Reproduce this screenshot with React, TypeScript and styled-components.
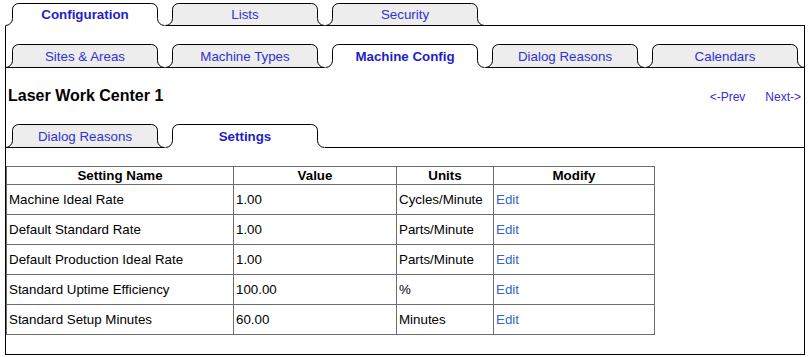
import React from "react";
import styled, { createGlobalStyle } from "styled-components";

const Global = createGlobalStyle`
  html, body { margin: 0; padding: 0; background: #ffffff; }
  body {
    font-family: "Liberation Sans", Arial, Helvetica, sans-serif;
    font-size: 13.33px;
    color: #000000;
  }
`;

const Page = styled.div`
  width: 800px;
  padding: 3px 0 0 5px;
`;

const Strip = styled.div<{ $h: number; $inset?: boolean; $mt?: number }>`
  display: flex;
  height: ${(p) => p.$h}px;
  margin: ${(p) => p.$mt ?? 0}px ${(p) => (p.$inset ? -1 : 0)}px 0;
`;

const TabSlot = styled.div<{ $active?: boolean }>`
  position: relative;
  flex: 0 0 160px;
  display: flex;
  align-items: center;
  justify-content: center;
  font-size: 13.33px;
  font-weight: ${(p) => (p.$active ? 700 : 400)};
  color: ${(p) => (p.$active ? "#1e1ec6" : "#3030d4")};
  cursor: pointer;
`;

const TabShape = styled.svg`
  position: absolute;
  left: 0;
  top: 0;
  width: 100%;
  height: 100%;
  overflow: visible;
`;

const TabLabel = styled.span`
  position: relative;
`;

const StripRest = styled.div`
  flex: 1;
  border-bottom: 1px solid #000000;
`;

const Panel = styled.div`
  border: 1px solid #000000;
  border-top: none;
  padding: 18px 0 19px 0;
`;

const HeaderRow = styled.div`
  display: flex;
  align-items: center;
  justify-content: space-between;
  height: 20px;
  margin: 18px 3px 0 2px;
`;

const Title = styled.h1`
  margin: 0;
  font-size: 16px;
  font-weight: 700;
  color: #000000;
`;

const Pager = styled.div`
  display: flex;
  gap: 20px;
  font-size: 12px;
  padding-top: 2px;
`;

const PagerLink = styled.a`
  color: #2e2ed6;
  text-decoration: none;
  cursor: pointer;
`;

const Grid = styled.table`
  border-collapse: collapse;
  table-layout: fixed;
  width: 648px;
  margin-top: 18px;
  font-size: 13.33px;
`;

const Col = styled.col<{ $w: number }>`
  width: ${(p) => p.$w}px;
`;

const HeadCell = styled.th`
  height: 17px;
  padding: 0;
  border: 1px solid #6c6c6c;
  font-weight: 700;
  text-align: center;
  vertical-align: middle;
`;

const Cell = styled.td`
  height: 29px;
  padding: 0 2px;
  border: 1px solid #6c6c6c;
  text-align: left;
  vertical-align: middle;
  white-space: nowrap;
`;

const EditLink = styled.a`
  color: #3366cc;
  text-decoration: none;
  cursor: pointer;
`;

const tabPath = (w: number, h: number, closed: boolean) => {
  const b = h - 0.5;
  const f = 7;
  const r = 6;
  return (
    `M0.5 ${b} A${f} ${f} 0 0 0 ${f + 0.5} ${b - f} ` +
    `L${f + 0.5} ${r + 0.5} A${r} ${r} 0 0 1 ${f + r + 0.5} 0.5 ` +
    `L${w - f - r - 0.5} 0.5 A${r} ${r} 0 0 1 ${w - f - 0.5} ${r + 0.5} ` +
    `L${w - f - 0.5} ${b - f} A${f} ${f} 0 0 0 ${w - 0.5} ${b}` +
    (closed ? " Z" : "")
  );
};

type TabProps = { label: string; active?: boolean; h: number };

const Tab = ({ label, active, h }: TabProps) => (
  <TabSlot $active={active}>
    <TabShape viewBox={`0 0 160 ${h}`} preserveAspectRatio="none">
      <path
        d={tabPath(160, h, !active)}
        fill={active ? "#ffffff" : "#ededed"}
        stroke="#000000"
        strokeWidth={1}
      />
    </TabShape>
    <TabLabel>{label}</TabLabel>
  </TabSlot>
);

const rows = [
  { name: "Machine Ideal Rate", value: "1.00", units: "Cycles/Minute" },
  { name: "Default Standard Rate", value: "1.00", units: "Parts/Minute" },
  { name: "Default Production Ideal Rate", value: "1.00", units: "Parts/Minute" },
  { name: "Standard Uptime Efficiency", value: "100.00", units: "%" },
  { name: "Standard Setup Minutes", value: "60.00", units: "Minutes" },
];

export default function App() {
  return (
    <>
      <Global />
      <Page>
        <Strip $h={23}>
          <Tab h={23} label="Configuration" active />
          <Tab h={23} label="Lists" />
          <Tab h={23} label="Security" />
          <StripRest />
        </Strip>
        <Panel>
          <Strip $h={24} $inset>
            <Tab h={24} label="Sites & Areas" />
            <Tab h={24} label="Machine Types" />
            <Tab h={24} label="Machine Config" active />
            <Tab h={24} label="Dialog Reasons" />
            <Tab h={24} label="Calendars" />
          </Strip>
          <HeaderRow>
            <Title>Laser Work Center 1</Title>
            <Pager>
              <PagerLink>&lt;-Prev</PagerLink>
              <PagerLink>Next-&gt;</PagerLink>
            </Pager>
          </HeaderRow>
          <Strip $h={24} $inset $mt={18}>
            <Tab h={24} label="Dialog Reasons" />
            <Tab h={24} label="Settings" active />
            <StripRest />
          </Strip>
          <Grid>
            <colgroup>
              <Col $w={227} />
              <Col $w={163} />
              <Col $w={97} />
              <Col $w={161} />
            </colgroup>
            <thead>
              <tr>
                <HeadCell>Setting Name</HeadCell>
                <HeadCell>Value</HeadCell>
                <HeadCell>Units</HeadCell>
                <HeadCell>Modify</HeadCell>
              </tr>
            </thead>
            <tbody>
              {rows.map((r) => (
                <tr key={r.name}>
                  <Cell>{r.name}</Cell>
                  <Cell>{r.value}</Cell>
                  <Cell>{r.units}</Cell>
                  <Cell>
                    <EditLink>Edit</EditLink>
                  </Cell>
                </tr>
              ))}
            </tbody>
          </Grid>
        </Panel>
      </Page>
    </>
  );
}
